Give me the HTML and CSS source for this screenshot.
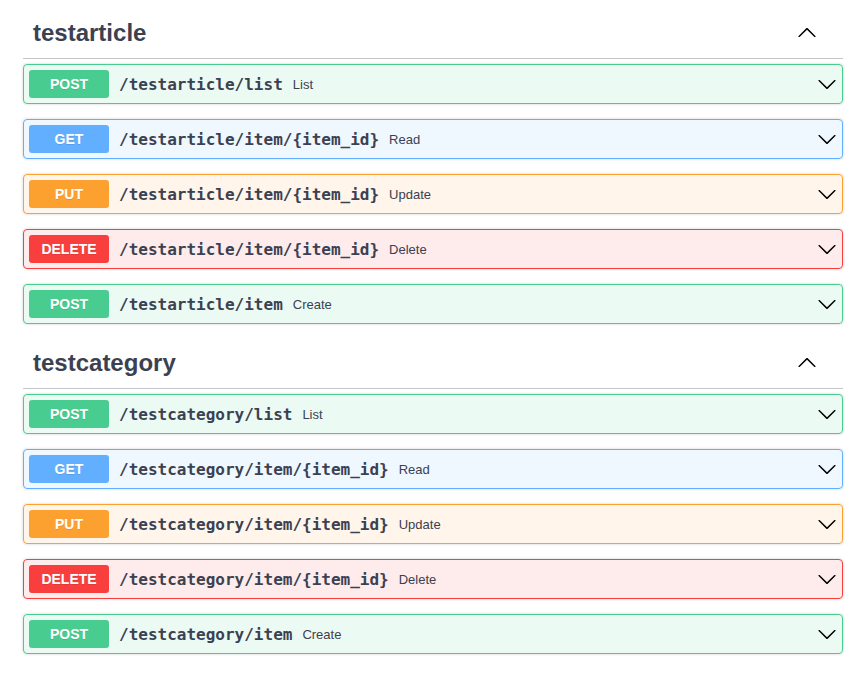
FILE: index.html
```html
<!DOCTYPE html>
<html>
<head>
<meta charset="utf-8">
<link rel="stylesheet" href="styles.css">
</head>
<body>
<div class="wrapper">
  <section class="tag-section">
    <h3 class="tag">
      <span class="tag-name">testarticle</span>
      <button class="expand" title="Collapse operation">
        <svg class="arrow" width="20" height="20" viewBox="0 0 20 20"><path d="M17.418 14.908c.272.268.709.268.979 0s.271-.701 0-.969l-7.908-7.83c-.27-.268-.707-.268-.979 0l-7.908 7.83c-.27.268-.27.701 0 .969.271.268.709.268.979 0L10 7.767l7.418 7.141z"/></svg>
      </button>
    </h3>
    <div class="ops">
      <div class="op post"><span class="method">POST</span><span class="path">/testarticle/list</span><span class="desc">List</span><svg class="arrow" width="20" height="20" viewBox="0 0 20 20"><path d="M17.418 6.109c.272-.268.709-.268.979 0s.271.701 0 .969l-7.908 7.83c-.27.268-.707.268-.979 0l-7.908-7.83c-.27-.268-.27-.701 0-.969.271-.268.709-.268.979 0L10 13.25l7.418-7.141z"/></svg></div>
      <div class="op get"><span class="method">GET</span><span class="path">/testarticle/item/{item_id}</span><span class="desc">Read</span><svg class="arrow" width="20" height="20" viewBox="0 0 20 20"><path d="M17.418 6.109c.272-.268.709-.268.979 0s.271.701 0 .969l-7.908 7.83c-.27.268-.707.268-.979 0l-7.908-7.83c-.27-.268-.27-.701 0-.969.271-.268.709-.268.979 0L10 13.25l7.418-7.141z"/></svg></div>
      <div class="op put"><span class="method">PUT</span><span class="path">/testarticle/item/{item_id}</span><span class="desc">Update</span><svg class="arrow" width="20" height="20" viewBox="0 0 20 20"><path d="M17.418 6.109c.272-.268.709-.268.979 0s.271.701 0 .969l-7.908 7.83c-.27.268-.707.268-.979 0l-7.908-7.83c-.27-.268-.27-.701 0-.969.271-.268.709-.268.979 0L10 13.25l7.418-7.141z"/></svg></div>
      <div class="op delete"><span class="method">DELETE</span><span class="path">/testarticle/item/{item_id}</span><span class="desc">Delete</span><svg class="arrow" width="20" height="20" viewBox="0 0 20 20"><path d="M17.418 6.109c.272-.268.709-.268.979 0s.271.701 0 .969l-7.908 7.83c-.27.268-.707.268-.979 0l-7.908-7.83c-.27-.268-.27-.701 0-.969.271-.268.709-.268.979 0L10 13.25l7.418-7.141z"/></svg></div>
      <div class="op post"><span class="method">POST</span><span class="path">/testarticle/item</span><span class="desc">Create</span><svg class="arrow" width="20" height="20" viewBox="0 0 20 20"><path d="M17.418 6.109c.272-.268.709-.268.979 0s.271.701 0 .969l-7.908 7.83c-.27.268-.707.268-.979 0l-7.908-7.83c-.27-.268-.27-.701 0-.969.271-.268.709-.268.979 0L10 13.25l7.418-7.141z"/></svg></div>
    </div>
  </section>
  <section class="tag-section">
    <h3 class="tag">
      <span class="tag-name">testcategory</span>
      <button class="expand" title="Collapse operation">
        <svg class="arrow" width="20" height="20" viewBox="0 0 20 20"><path d="M17.418 14.908c.272.268.709.268.979 0s.271-.701 0-.969l-7.908-7.83c-.27-.268-.707-.268-.979 0l-7.908 7.83c-.27.268-.27.701 0 .969.271.268.709.268.979 0L10 7.767l7.418 7.141z"/></svg>
      </button>
    </h3>
    <div class="ops">
      <div class="op post"><span class="method">POST</span><span class="path">/testcategory/list</span><span class="desc">List</span><svg class="arrow" width="20" height="20" viewBox="0 0 20 20"><path d="M17.418 6.109c.272-.268.709-.268.979 0s.271.701 0 .969l-7.908 7.83c-.27.268-.707.268-.979 0l-7.908-7.83c-.27-.268-.27-.701 0-.969.271-.268.709-.268.979 0L10 13.25l7.418-7.141z"/></svg></div>
      <div class="op get"><span class="method">GET</span><span class="path">/testcategory/item/{item_id}</span><span class="desc">Read</span><svg class="arrow" width="20" height="20" viewBox="0 0 20 20"><path d="M17.418 6.109c.272-.268.709-.268.979 0s.271.701 0 .969l-7.908 7.83c-.27.268-.707.268-.979 0l-7.908-7.83c-.27-.268-.27-.701 0-.969.271-.268.709-.268.979 0L10 13.25l7.418-7.141z"/></svg></div>
      <div class="op put"><span class="method">PUT</span><span class="path">/testcategory/item/{item_id}</span><span class="desc">Update</span><svg class="arrow" width="20" height="20" viewBox="0 0 20 20"><path d="M17.418 6.109c.272-.268.709-.268.979 0s.271.701 0 .969l-7.908 7.83c-.27.268-.707.268-.979 0l-7.908-7.83c-.27-.268-.27-.701 0-.969.271-.268.709-.268.979 0L10 13.25l7.418-7.141z"/></svg></div>
      <div class="op delete"><span class="method">DELETE</span><span class="path">/testcategory/item/{item_id}</span><span class="desc">Delete</span><svg class="arrow" width="20" height="20" viewBox="0 0 20 20"><path d="M17.418 6.109c.272-.268.709-.268.979 0s.271.701 0 .969l-7.908 7.83c-.27.268-.707.268-.979 0l-7.908-7.83c-.27-.268-.27-.701 0-.969.271-.268.709-.268.979 0L10 13.25l7.418-7.141z"/></svg></div>
      <div class="op post"><span class="method">POST</span><span class="path">/testcategory/item</span><span class="desc">Create</span><svg class="arrow" width="20" height="20" viewBox="0 0 20 20"><path d="M17.418 6.109c.272-.268.709-.268.979 0s.271.701 0 .969l-7.908 7.83c-.27.268-.707.268-.979 0l-7.908-7.83c-.27-.268-.27-.701 0-.969.271-.268.709-.268.979 0L10 13.25l7.418-7.141z"/></svg></div>
    </div>
  </section>
</div>
</body>
</html>
```

FILE: styles.css
```css
* { box-sizing: border-box; }

body {
  margin: 0;
  background: #fff;
  font-family: "Liberation Sans", Arial, sans-serif;
  color: #3b4151;
}

.wrapper {
  width: 820px;
  margin-left: 23px;
  padding-top: 9px;
}

.tag {
  display: flex;
  align-items: center;
  margin: 0 0 5px;
  padding: 9px 20px 11px 10px;
  border-bottom: 1px solid rgba(59, 65, 81, 0.3);
  font-size: 24px;
  font-weight: 700;
  color: #3b4151;
  min-height: 50px;
}

.tag-name {
  flex: 1;
  line-height: 29px;
}

.expand {
  border: none;
  background: none;
  padding: 0;
  margin: 0 6px 1px 0;
  display: flex;
  cursor: pointer;
}

.arrow {
  fill: #000;
  flex: none;
}

.ops {
  display: flex;
  flex-direction: column;
  gap: 15px;
  margin-bottom: 15px;
}

.op {
  display: flex;
  align-items: center;
  padding: 5px;
  border: 1px solid;
  border-radius: 4px;
  box-shadow: 0 0 3px rgba(0, 0, 0, 0.19);
}

.method {
  min-width: 80px;
  padding: 6px 0;
  border-radius: 3px;
  color: #fff;
  font-size: 14px;
  font-weight: 700;
  line-height: 16px;
  text-align: center;
  text-shadow: 0 1px 0 rgba(0, 0, 0, 0.1);
}

.path {
  padding: 0 10px;
  font-family: "DejaVu Sans Mono", monospace;
  font-size: 16px;
  font-weight: 700;
  color: #3b4151;
}

.desc {
  flex: 1;
  font-size: 13px;
  color: #3b4151;
}

.post { background: rgba(73, 204, 144, 0.1); border-color: #49cc90; }
.post .method { background: #49cc90; }
.get { background: rgba(97, 175, 254, 0.1); border-color: #61affe; }
.get .method { background: #61affe; }
.put { background: rgba(252, 161, 48, 0.1); border-color: #fca130; }
.put .method { background: #fca130; }
.delete { background: rgba(249, 62, 62, 0.1); border-color: #f93e3e; }
.delete .method { background: #f93e3e; }
```
